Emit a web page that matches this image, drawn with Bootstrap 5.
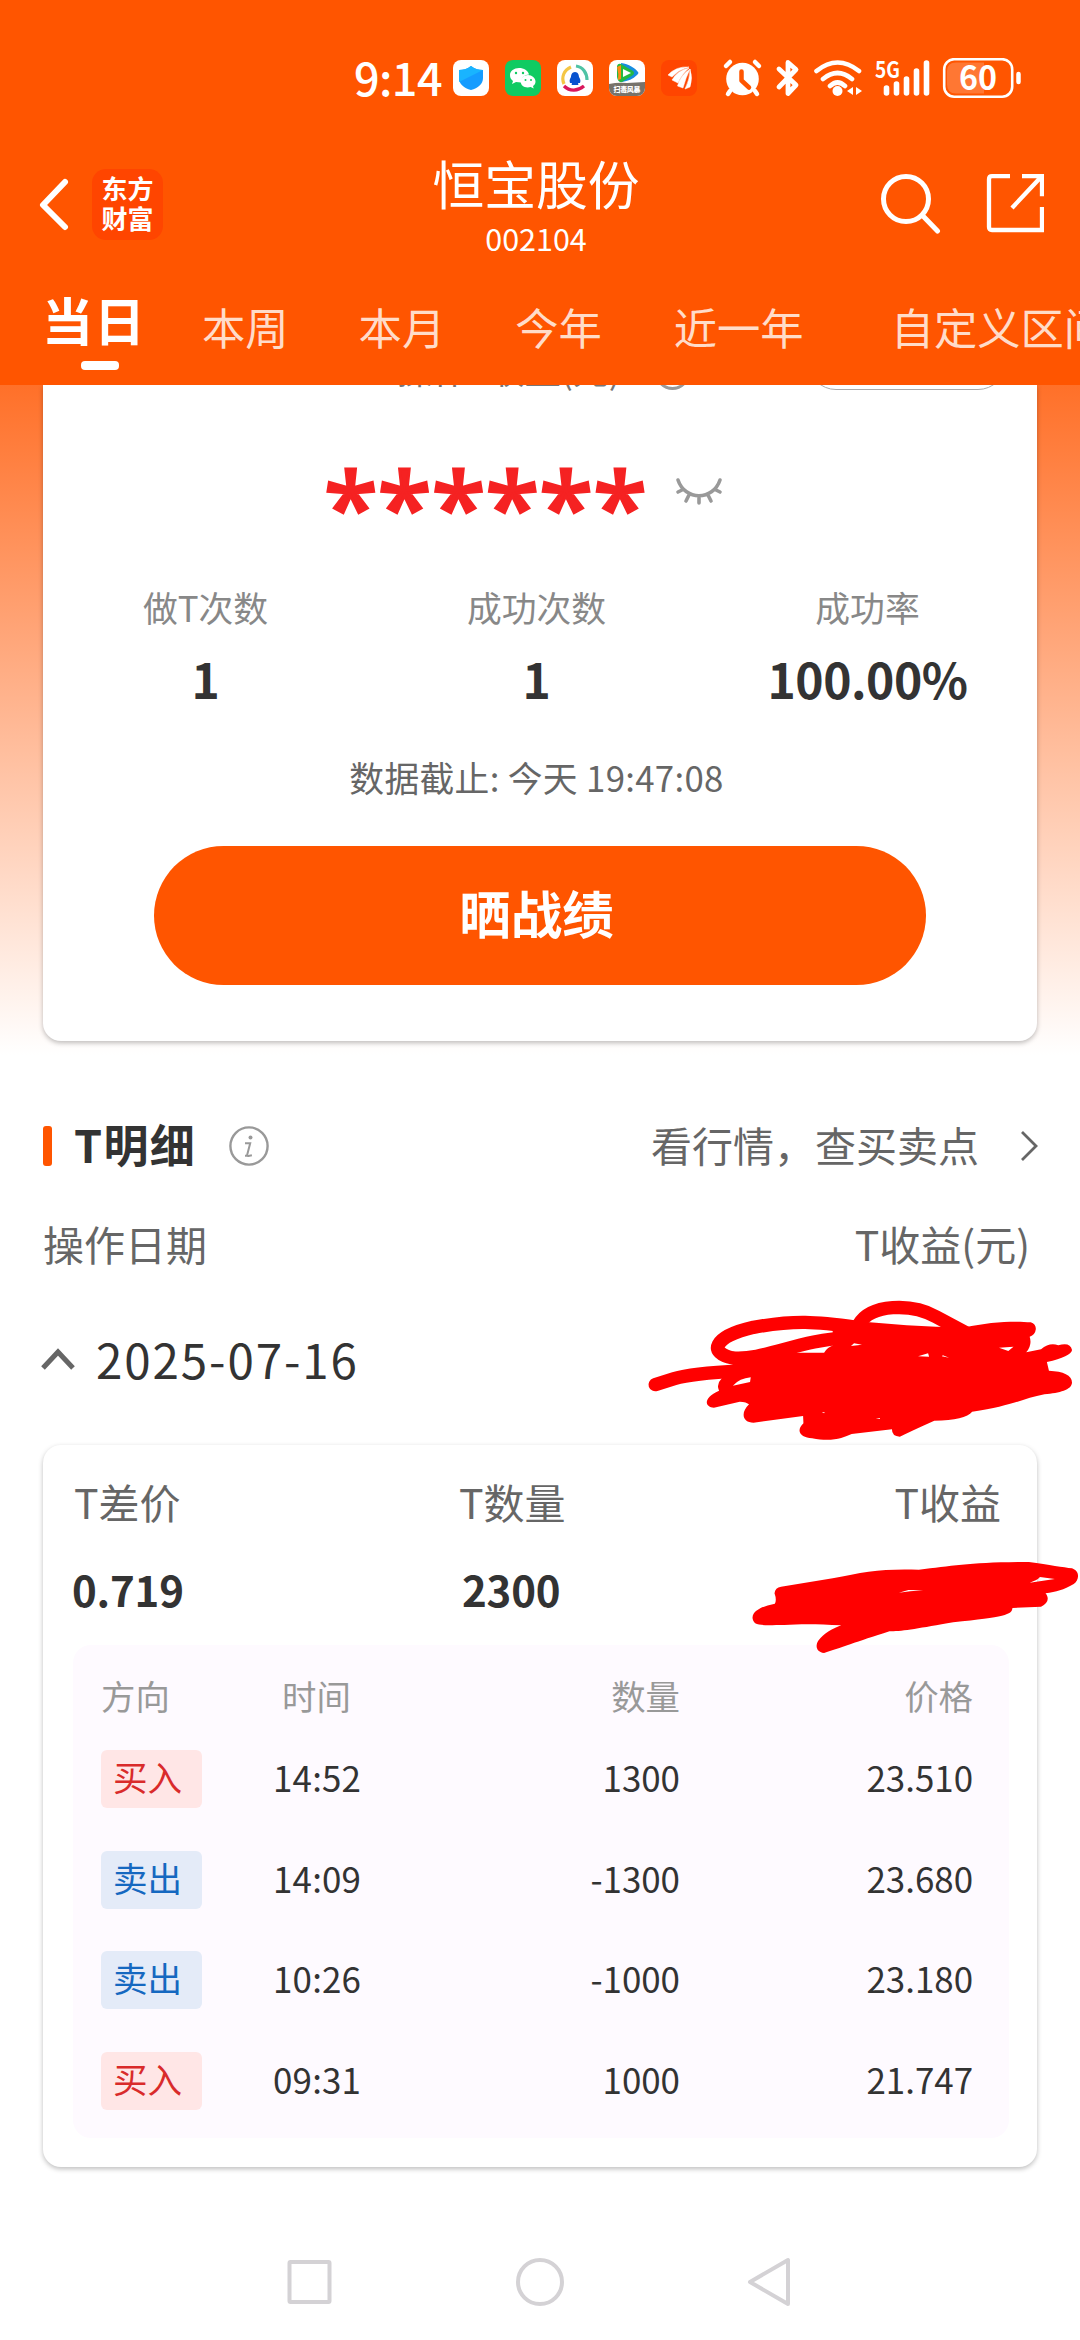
<!DOCTYPE html>
<html lang="zh-CN">
<head>
<meta charset="utf-8">
<meta name="viewport" content="width=device-width, initial-scale=1">
<title>恒宝股份 002104</title>
<link href="https://cdn.jsdelivr.net/npm/bootstrap@5.3.0/dist/css/bootstrap.min.css" rel="stylesheet">
<style>
  body { font-family: "Noto Sans CJK SC", sans-serif; color: #333; background: #fff; }
  .screen { width: 1080px; height: 2340px; background: linear-gradient(#ff5500 258px, #fff 1055px); }
  svg { display: block; flex: none; }
  .top-area { height: 385px; background: #ff5500; z-index: 2; }
  .status-row { height: 96px; padding: 58px 59px 0 353px; }
  .clock { font-size: 45px; line-height: 38px; width: 100px; font-weight: 500; padding-left: 1px; letter-spacing: -.6px; }
  .title-row { height: 157px; padding: 65px 36px 0 38px; }
  .back-icon { margin-top: 17px; }
  .app-logo { width: 71px; height: 71px; margin: 8px 0 0 23px; border-radius: 14px; background: #ff4500; font: 700 26px/30px "Noto Sans CJK SC", sans-serif; padding-top: 4px; }
  .stock-wrap { margin-top: -8px; padding-right: 8px; }
  .stock-name { font-size: 51.8px; line-height: 60px; }
  .stock-code { font-size: 30.500px; line-height: 40px; margin-top: 5px; }
  .tool-icons { margin-top: 3px; }
  .tabs-row { padding-left: 44px; height: 132px; padding-top: 36px; }
  .tab-item { font-size: 43.3px; line-height: 60px; padding-top: 7px; color: #ffdcc9; }
  .tab-item.active { font-size: 51px; padding-top: 0; color: #fff; font-weight: 700; width: 98px; letter-spacing: 1px; margin-left: -2px; margin-right: 2px; }
  .tab-line { width: 38px; height: 9px; border-radius: 4px; background: #fff; margin: 12px 0 0 39px; }
  .gap-a { margin-left: 60px; } .gap-b { margin-left: 70px; } .gap-c { margin-left: 72px; } .gap-d { margin-left: 87px; }
  .sheet { margin: 0 43px; background: #fff; border-radius: 18px; box-shadow: 0 2px 5px rgba(0,0,0,.26); }
  .summary { height: 656px; border-radius: 0 0 18px 18px; overflow: hidden; }
  .cut-row { height: 4px; }
  .cut-title { font-size: 36px; line-height: 50px; margin-top: -42px; margin-left: 332px; color: #777; width: 280px; word-spacing: 12px; }
  .cut-ring { width: 35px; height: 35px; border: 3px solid #999; border-radius: 50%; margin-top: -30px; }
  .cut-pill { width: 198px; height: 56px; border: 1px solid #aaa; border-radius: 28px; margin-top: -51px; margin-left: 118px; }
  .mask-row { height: 143px; padding: 44px 0 0 280px; }
  .stars { font: 400 97.7px/130px "Noto Sans", sans-serif; color: #f52222; -webkit-text-stroke: 3px #f52222; height: 90px; width: 352px; margin-top: 8px; padding-left: 1px; }
  .eye-icon { margin-top: 44px; }
  .stat-row { width: 993px; margin-left: -3px; text-align: center; padding-top: 50px; }
  .stat-label { font-size: 34.8px; line-height: 50px; color: #888; }
  .stat-value { font-size: 48px; line-height: 60px; font-weight: 700; margin-top: 16px; letter-spacing: -.5px; }
  .deadline { font-size: 34.8px; line-height: 50px; color: #666; margin-top: 44px; padding-right: 7px; letter-spacing: .3px; }
  .btn-share { width: 772px; height: 139px; margin-top: 44px; background: #ff5500; color: #fff; font-size: 51.5px; font-weight: 700; border-radius: 70px; border: 0; padding: 0 7px 7px 0; }
  .detail-head { height: 60px; margin: 75px 42px 0 43px; }
  .detail-bar { width: 9px; height: 40px; border-radius: 3px; background: #ff5500; margin-right: 22px; }
  .detail-title { font-size: 45px; line-height: 60px; font-weight: 700; margin: -5px 0 0 0; width: 155px; letter-spacing: 1.3px; }
  .fs-mid { font-size: 41px; line-height: 60px; color: #666; }
  .look-link { margin-top: -4px; margin-right: 41px; }
  .col-head { height: 60px; margin: 37px 50px 0 43px; }
  .date-row { height: 60px; margin: 56px 43px 0 41px; }
  .date-text { font-size: 47.5px; line-height: 60px; letter-spacing: 1.9px; margin-left: 21px; }
  .trade { height: 722px; margin-top: 56px; padding: 26px 28px 0 30px; }
  .triple { padding: 0 8px 0 1px; } .triple > :first-child { width: 385px; }
  .triple-val { font-size: 42px; line-height: 60px; font-weight: 700; margin-top: 28px; height: 60px; letter-spacing: -.2px; }
  .triple-val > :first-child { width: 390px; margin-left: -1px; }
  .orders { height: 493px; border-radius: 18px; margin-top: 26px; background: #fefaff; padding: 26px 36px 0 28px; font-size: 34.9px; }
  .order-row { height: 58px; margin-bottom: 42.7px; line-height: 54px; }
  .order-row.heading { height: 48px; line-height: 48px; margin-bottom: 31px; color: #999; font-size: 34.4px; }
  .c-dir { width: 172px; } .c-time { width: 206px; letter-spacing: .2px; } .c-num { width: 201px; text-align: right; } .c-price { width: 293px; text-align: right; }
  .heading .c-time { padding-left: 9px; }
  .tag { display: block; width: 101px; height: 58px; border-radius: 6px; padding-left: 12px; line-height: 52px; font-size: 34.6px; }
  .tag-buy { background: #ffe6e6; color: #d92b2b; }
  .tag-sell { background: #e4ebf8; color: #1568c0; }
  .nav-keys { padding: 89px 0 0 286px; }
  .scribble { left: 0; top: 0; z-index: 3; pointer-events: none; }
</style>
</head>
<body>
<div class="screen position-relative overflow-hidden">
  <header class="top-area position-relative text-white">
    <div class="status-row d-flex">
      <div class="clock">9:14</div>
      <svg width="568" height="40" viewBox="453 58 568 40">
        <g>
          <rect x="453" y="60" width="36" height="36" rx="8" fill="#fff"/>
          <path d="M471 66c4 3 8 4 12 4v8c0 6-5 10-12 12-7-2-12-6-12-12v-8c4 0 8-1 12-4z" fill="#159cff"/>
          <path d="M471 66c4 3 8 4 12 4l-24 12v-12c4 0 8-1 12-4z" fill="#19b4ff"/>
          <rect x="505" y="60" width="36" height="36" rx="8" fill="#0fcb62"/>
          <path d="M519 68c-5 0-9 3-9 7 0 3 1 4 3 6l-1 3 4-2 5 .5c0-5 4-8 8-8-1-4-5-6.500-10-6.500z" fill="#fff"/>
          <path d="M528 75c4 0 7.500 3 7.500 6.500 0 2-1 3.500-2.500 4.500l.7 2.600-3-1.500c-6 1.500-10-1.500-10-5.600 0-3.500 3-6.500 7.300-6.500z" fill="#fff"/>
          <g fill="#0fcb62"><circle cx="516" cy="73" r="1.200"/><circle cx="523" cy="73" r="1.200"/><circle cx="525.500" cy="80" r="1"/><circle cx="531" cy="80" r="1"/></g>
          <rect x="557" y="60" width="36" height="36" rx="8" fill="#fff"/>
          <g fill="none" stroke-width="3.200">
            <path d="M564 84c-3-7 0-14 7-17" stroke="#f4c645"/><path d="M576 66c7 1 11 7 11 14" stroke="#4fc3a5"/><path d="M564 86c6 6 14 5 20 0" stroke="#d9175c"/>
          </g>
          <path d="M575 72c3 0 4 3 4 5 1 2 2 3 1 6h-2c0 1 1 1 0 2h-6c-1-1 0-1 0-2h-2c-1-3 0-4 1-6 0-2 1-5 4-5z" fill="#0752cf"/>
          <clipPath id="vid"><rect x="609" y="60" width="36" height="36" rx="8"/></clipPath>
          <g clip-path="url(#vid)">
            <rect x="609" y="60" width="36" height="36" fill="#fff"/>
            <path d="M609 84q9-2 18-1l18-1v14h-36z" fill="#77736b"/>
            <path d="M621 63c8 1 14 5 17 9 1 1 0 2-1 3-4 4-9 6-15 7z" fill="#168de0"/>
            <path d="M617 66q1-3 4-2l12 7q2 2 0 4l-11 7q-4 1-5-5z" fill="#24b943"/>
            <path d="M617 67q2 7 1 13l3-1V65z" fill="#ff8c14"/>
            <path d="M623 69l8 4-8 4z" fill="#fff"/>
            <text x="613.500" y="92" font-size="7" font-weight="900" fill="#fff" textLength="27">扫毒风暴</text>
          </g>
          <rect x="661" y="60" width="36" height="36" rx="8" fill="#ff4500"/>
          <g fill="#fff" stroke="#fff" stroke-width=".5"><path d="M668 75q8-9 21-8-9 2-17 10z"/><path d="M672 80q6-10 17-12-7 6-11 15z"/><path d="M677.500 86q3-11 12.500-17-4 8-7 19z"/><path d="M685 89q5-10 5-20 3 9 0 18z"/></g>
        </g>
        <g fill="none" stroke="#fff" stroke-linecap="round" stroke-linejoin="round">
          <circle cx="742.500" cy="79" r="16.300" fill="#fff" stroke="none"/>
          <path d="M726 66l4-4m25 0l4 4M730 91l-2 3m27-3l2 3" stroke-width="4.500"/>
          <path d="M741.500 71.500v9l7.500 7" stroke="#ff5500" stroke-width="4.500"/>
          <path d="M779 69l17 16-8 8.500V62.500l8 7-17 17.500" stroke-width="4.800"/>
          <path d="M816.500 71q21-17 42.500 0M823 79q14.500-12 29 0M830 86q7.500-7 15 0" stroke-width="4.600"/>
          <circle cx="837.500" cy="91" r="5" fill="#fff" stroke="none"/>
          <path d="M853 87v8l-6-4zM856 87v8l6-4z" fill="#fff" stroke="none"/>
          <path d="M886.500 88v5M896.500 84v9M906.500 79v14M916.500 71v22M926.500 63v30" stroke-width="5.600"/>
          <rect x="944.200" y="59.200" width="68" height="37.500" rx="10" stroke-width="2.600"/>
          <path d="M1018.500 74v8" stroke-width="4.500"/>
        </g>
        <path d="M984 62.500v31h-28q-9 0-9-9V71q0-8.500 9-8.500z" fill="#fff" opacity=".2"/>
        <text x="875" y="77.500" font-size="22.500" font-weight="700" fill="#fff" textLength="25" lengthAdjust="spacingAndGlyphs">5G</text>
        <text x="959" y="90" font-size="33" font-weight="700" fill="#fff" textLength="38" lengthAdjust="spacingAndGlyphs">60</text>
      </svg>
    </div>
    <div class="title-row d-flex position-relative">
      <svg class="back-icon" width="31" height="55" viewBox="0 0 31 55"><path d="M27 4L5 27l22 22" fill="none" stroke="#fff" stroke-width="6" stroke-linecap="round" stroke-linejoin="round"/></svg>
      <div class="app-logo text-center">东方<br>财富</div>
      <div class="position-absolute start-0 end-0 text-center stock-wrap">
        <div class="stock-name">恒宝股份</div>
        <div class="stock-code">002104</div>
      </div>
      <svg class="tool-icons ms-auto" width="165" height="70" viewBox="879 165 165 70" fill="none" stroke="#fff" stroke-width="5">
        <circle cx="906" cy="200" r="22.500"/><path d="M923 217l14.500 15" stroke-linecap="round"/>
        <path d="M1010 177.200h-18q-3 0-3 3V228q0 3 3 3h50v-23M1022 177.200h20v20M1041 178l-29 31"  stroke-width="4.300"/>
      </svg>
    </div>
    <nav class="tabs-row d-flex text-nowrap">
      <div class="tab-item active">当日<div class="tab-line"></div></div>
      <div class="tab-item gap-a">本周</div>
      <div class="tab-item gap-b">本月</div>
      <div class="tab-item gap-b">今年</div>
      <div class="tab-item gap-c">近一年</div>
      <div class="tab-item gap-d">自定义区间</div>
    </nav>
  </header>

  <section class="sheet summary">
    <div class="cut-row d-flex text-nowrap">
      <div class="cut-title">T操作 收益(元)</div><div class="cut-ring"></div><div class="cut-pill"></div>
    </div>
    <div class="mask-row d-flex">
      <div class="stars">******</div>
      <svg class="eye-icon" width="48" height="30" viewBox="0 0 48 30" fill="none" stroke="#999" stroke-width="3.600" stroke-linecap="round"><path d="M3 3c7 21 35 21 42 0M7 13l-4 2m38-2l4 2M14 18l-3 6m22-6l3 6M24 20v6"/></svg>
    </div>
    <div class="stat-row row g-0">
      <div class="col-4"><div class="stat-label">做T次数</div><div class="stat-value">1</div></div>
      <div class="col-4"><div class="stat-label">成功次数</div><div class="stat-value">1</div></div>
      <div class="col-4"><div class="stat-label">成功率</div><div class="stat-value">100.00%</div></div>
    </div>
    <div class="deadline text-center">数据截止: 今天 19:47:08</div>
    <button class="btn btn-share d-block mx-auto">晒战绩</button>
  </section>

  <section>
    <div class="detail-head d-flex align-items-center">
      <span class="detail-bar"></span>
      <span class="detail-title text-nowrap">T明细</span>
      <svg width="40" height="40" viewBox="0 0 40 40"><circle cx="20" cy="20" r="18.600" fill="none" stroke="#999" stroke-width="2.400"/><circle cx="21.500" cy="11.500" r="2" fill="#999"/><path d="M16 17.200h5.200l-3 11.500q-.3 1.600 1.200 1.200l3.500-.7M16 29.800h3" fill="none" stroke="#999" stroke-width="2"/></svg>
      <span class="fs-mid look-link ms-auto">看行情，查买卖点</span>
      <svg width="18" height="32" viewBox="0 0 18 32"><path d="M2 2l14 14L2 30" fill="none" stroke="#666" stroke-width="2.800"/></svg>
    </div>
    <div class="col-head d-flex justify-content-between fs-mid"><span>操作日期</span><span>T收益(元)</span></div>
    <div class="date-row d-flex align-items-center">
      <svg width="34" height="22" viewBox="0 0 34 22"><path d="M2 20L17 4l15 16" fill="none" stroke="#666" stroke-width="5"/></svg>
      <span class="date-text">2025-07-16</span>
    </div>
  </section>

  <section class="sheet trade">
    <div class="triple d-flex fs-mid"><span>T差价</span><span>T数量</span><span class="ms-auto">T收益</span></div>
    <div class="triple-val d-flex"><span>0.719</span><span>2300</span></div>
    <div class="orders">
      <div class="order-row heading d-flex"><span class="c-dir">方向</span><span class="c-time">时间</span><span class="c-num">数量</span><span class="c-price">价格</span></div>
      <div class="order-row d-flex"><span class="c-dir"><span class="tag tag-buy">买入</span></span><span class="c-time">14:52</span><span class="c-num">1300</span><span class="c-price">23.510</span></div>
      <div class="order-row d-flex"><span class="c-dir"><span class="tag tag-sell">卖出</span></span><span class="c-time">14:09</span><span class="c-num">-1300</span><span class="c-price">23.680</span></div>
      <div class="order-row d-flex"><span class="c-dir"><span class="tag tag-sell">卖出</span></span><span class="c-time">10:26</span><span class="c-num">-1000</span><span class="c-price">23.180</span></div>
      <div class="order-row d-flex"><span class="c-dir"><span class="tag tag-buy">买入</span></span><span class="c-time">09:31</span><span class="c-num">1000</span><span class="c-price">21.747</span></div>
    </div>
  </section>

  <div class="nav-keys">
    <svg width="508" height="52" viewBox="286 2256 508 52" fill="none" stroke="#d4d2d5" stroke-width="4" stroke-linejoin="round">
      <rect x="289.500" y="2262" width="40" height="40" rx="1"/><circle cx="540" cy="2282" r="22"/><path d="M788 2260v44l-38-22z"/>
    </svg>
  </div>

  <svg class="scribble position-absolute" width="1080" height="2340" viewBox="0 0 1080 2340">
    <g transform="translate(540 1090) scale(.34435 .33333)">
      <g fill="none" stroke="#f00" stroke-width="40" stroke-linecap="round" stroke-linejoin="round">
        <path d="M335 884L390 866Q440 850 580 843"/>
        <path d="M920 712C800 695 740 690 620 712C500 740 490 790 560 804C650 812 750 750 900 742"/>
        <path d="M925 705C960 640 1080 640 1150 680L1240 730"/>
      </g>
      <path fill="#f00" fill-rule="evenodd" d="M850 688L1065 706L1150 710L1235 712C1300 696 1380 692 1425 697Q1440 702 1440 717Q1438 735 1422 740Q1430 765 1412 787L1455 778Q1480 756 1505 766Q1540 755 1545 780Q1542 800 1472 816L1478 842C1520 844 1545 855 1545 878C1543 900 1510 908 1465 913C1400 926 1370 948 1255 965Q1235 990 1145 992Q1080 1022 1045 1040Q1022 1040 1022 1018L905 1032C880 1043 850 1057 790 1045C760 1043 740 1025 765 1000L764 978L620 998C590 998 580 970 607 943Q600 936 580 935L505 953C480 953 470 925 520 902Q505 870 560 843L560 820L700 770L850 735ZM740 788Q780 770 852 766Q835 772 825 788ZM903 768L912 760L935 764ZM1098 799L1127 790L1130 800ZM1167 799L1170 796L1188 803ZM1333 773L1375 770L1360 783ZM560 887Q580 865 612 862L610 876ZM818 967h9l-2 3zM975 986l12-2v3z"/>
    </g>
    <g transform="translate(540 1430) scale(.34435 .33333)">
      <path fill="#f00" fill-rule="evenodd" d="M700 470L850 445C940 425 1000 415 1100 419C1200 408 1250 396 1420 396C1480 405 1520 412 1545 415C1570 425 1565 450 1550 462C1520 480 1500 485 1468 490C1480 505 1475 520 1455 530L1372 534C1370 555 1350 560 1200 577C1100 595 1050 605 1015 604C920 635 870 655 825 669C800 665 800 645 808 632C825 610 850 595 875 586C800 581 750 582 710 585C670 585 640 588 625 580C612 565 615 550 635 538Q650 527 682 521Q688 510 681 490Q683 472 700 470ZM1422 458Q1445 450 1452 441L1495 447ZM1042 488L1070 480L1113 481L1075 484Z"/>
    </g>
  </svg>
</div>
<script src="https://cdn.jsdelivr.net/npm/bootstrap@5.3.0/dist/js/bootstrap.bundle.min.js"></script>
</body>
</html>
